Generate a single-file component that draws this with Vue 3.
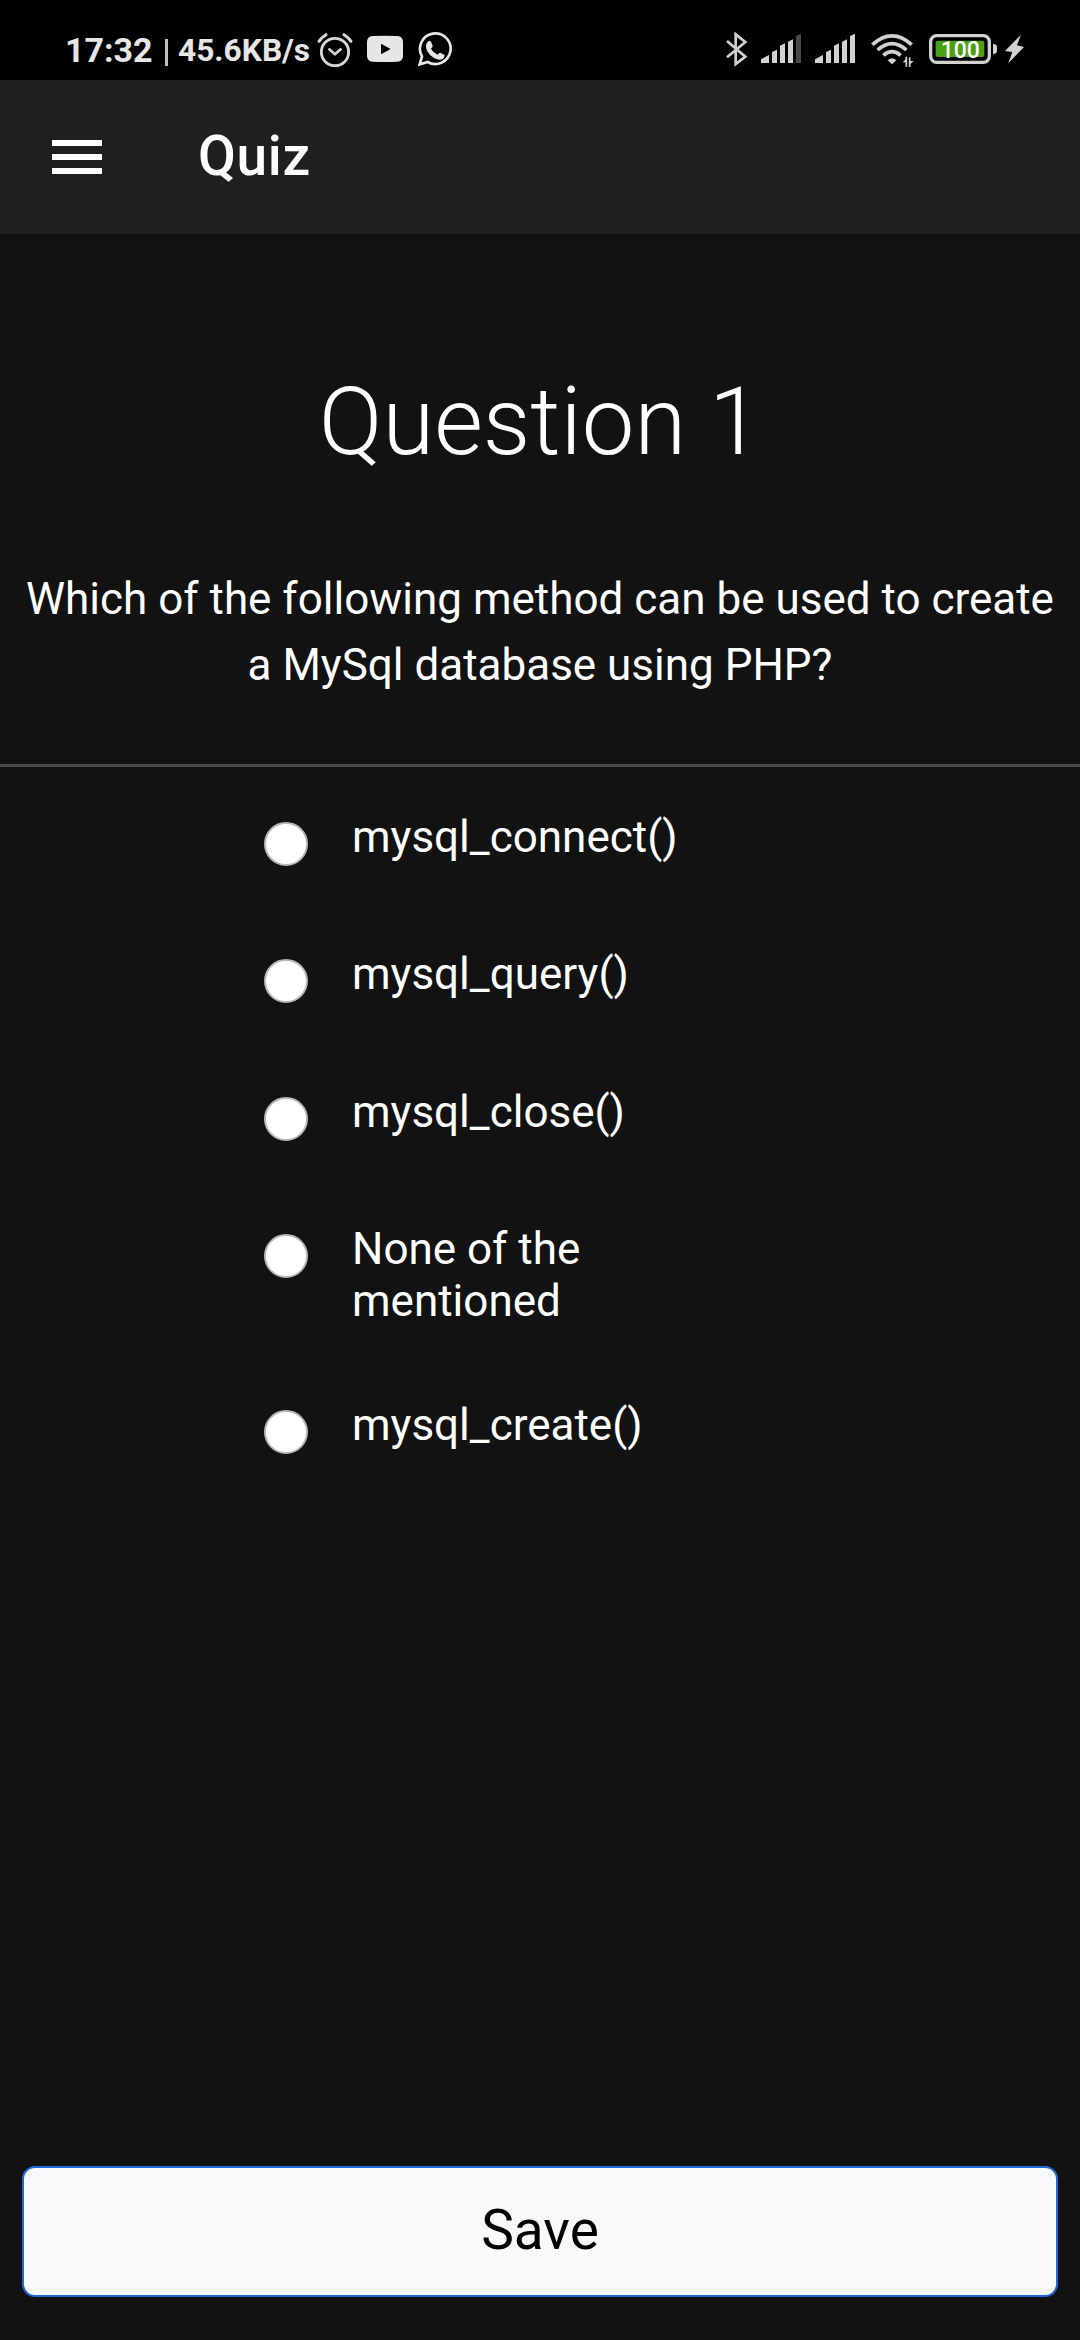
<script setup>
import { ref } from 'vue'

const question = {
  title: 'Question 1',
  text: 'Which of the following method can be used to create a MySql database using PHP?',
  options: ['mysql_connect()', 'mysql_query()', 'mysql_close()', 'None of the mentioned', 'mysql_create()']
}
const selected = ref(null)
</script>

<template>
  <div class="screen">
    <div class="status">
      <span class="clock">17:32</span>
      <span class="divider"></span>
      <span class="speed">45.6KB/s</span>
      <svg class="alarm" viewBox="828 -30 114 240" width="38" height="80" fill="none" stroke="#d6d6d6">
        <circle cx="885" cy="126" r="41" stroke-width="8.500" />
        <path d="M868 118l17 15 17-15" stroke-width="8" stroke-linecap="round" stroke-linejoin="round" />
        <path d="M837 94q8-12 21-20M933 94q-8-12-21-20" stroke-width="9" stroke-linecap="round" />
      </svg>
      <svg class="video" viewBox="981 -30 108 240" width="36" height="80">
        <path d="M998 78q37-2 74 0q17 1 17 18v42q0 16-17 17q-37 2-74 0q-17-1-17-17V96q0-17 17-18z" fill="#e6e6e6" />
        <path d="M1023 101v32l29-16z" fill="#000" />
      </svg>
      <svg class="chat" viewBox="1134 -30 102 240" width="34" height="80">
        <path d="M1139 163l7-24a46 46 0 1 1 17 17z" fill="none" stroke="#e6e6e6" stroke-width="8" />
        <path d="M1166 93q4-2 7 2l5 12q1 3-5 9q7 13 20 18q5-7 8-6l13 7q0 9-8 13q-9 4-24-4q-14-8-20-20q-7-14-2-24z" fill="#e6e6e6" />
      </svg>
      <span class="spacer"></span>
      <svg viewBox="78 -30 66 240" width="22" height="80" fill="none" stroke="#cfcfcf" stroke-width="8">
        <path d="M81 93l55 47-29 22V73l29 23-55 46" />
      </svg>
      <svg class="signal" viewBox="183 -30 120 240" width="40" height="80" fill="#d2d2d2">
        <path d="M183 159v-11l24-13v24zM216 159v-33l15-7v40zM240 159v-52l15-7v59zM264 159V95l15-7v71z" />
        <path d="M288 159V78l15-7v88z" fill="#484848" />
      </svg>
      <svg class="signal" viewBox="183 -30 120 240" width="40" height="80" fill="#d2d2d2">
        <path d="M183 159v-11l24-13v24zM216 159v-33l15-7v40zM240 159v-52l15-7v59zM264 159V95l15-7v71zM288 159V78l15-7v88z" />
      </svg>
      <svg class="wifi" viewBox="513 -30 129 240" width="43" height="80" fill="none" stroke="#d2d2d2" stroke-width="11">
        <path d="M517 104q59-53 118 0M533 120q43-38 86 0M550 136q26-22 52 0" />
        <path d="M563 151q13-13 26 0l-13 12z" fill="#d2d2d2" stroke="none" />
        <path d="M619 140v30M629 171v-29" stroke-width="5" />
        <path d="M608 157l11-11v11zM641 153l-12 11v-11z" fill="#d2d2d2" stroke="none" />
      </svg>
      <svg class="battery" viewBox="687 -30 204 240" width="68" height="80">
        <rect x="692" y="77" width="176" height="80" rx="18" fill="none" stroke="#d2d2d2" stroke-width="10" />
        <rect x="707" y="92" width="146" height="49" rx="6" fill="#49a012" />
        <path d="M879 102q12 0 12 9v12q0 9-12 9z" fill="#d2d2d2" />
        <text x="781" y="144" text-anchor="middle">100</text>
      </svg>
      <svg class="bolt" viewBox="915 -30 57 240" width="19" height="80">
        <path d="M963 74l-48 49 22 3-12 34 47-49-21-5z" fill="#d2d2d2" />
      </svg>
    </div>

    <header class="toolbar">
      <button class="menu" aria-label="Menu"><i></i><i></i><i></i></button>
      <span class="title">Quiz</span>
    </header>

    <main class="content">
      <h1>{{ question.title }}</h1>
      <p>{{ question.text }}</p>
      <div class="options">
        <label v-for="option in question.options" :key="option" class="option">
          <input v-model="selected" type="radio" name="answer" :value="option" />
          <span>{{ option }}</span>
        </label>
      </div>
    </main>

    <footer><button class="save">Save</button></footer>
  </div>
</template>

<style>
body { background: #121212; }
</style>

<style scoped>
.screen {
  width: 1080px;
  height: 2340px;
  display: flex;
  flex-direction: column;
  overflow: hidden;
  background: #121212;
  color: #fff;
  font-family: Roboto, sans-serif;
}
.status {
  flex: none;
  height: 80px;
  box-sizing: border-box;
  padding: 0 56px 0 65px;
  display: flex;
  background: #000;
  color: #e6e6e6;
  font-weight: 700;
  white-space: nowrap;
}
.status svg { flex: none; display: block; }
.clock { width: 100px; font-size: 34px; line-height: 100px; }
.divider { width: 3px; height: 27px; margin: 39px 10px 0 0; background: #bdbdbd; }
.speed { width: 138px; font-size: 31.700px; line-height: 101px; }
.video { margin-left: 13px; }
.chat { margin-left: 15px; }
.spacer { flex: 1; }
.signal { margin-left: 13px; }
.signal + .signal { margin-left: 14px; }
.wifi { margin-left: 16px; }
.battery { margin-left: 15px; }
.battery text { font-size: 69px; font-weight: 500; fill: #fff; }
.bolt { margin-left: 8px; }
.toolbar {
  flex: none;
  height: 154px;
  display: flex;
  align-items: center;
  background: #1f1f1f;
  box-shadow: 0 2px 12px rgba(0, 0, 0, .25);
}
.menu {
  width: 50px;
  margin: 0 0 0 52px;
  padding: 0;
  border: 0;
  background: none;
  display: flex;
  flex-direction: column;
  gap: 8.300px;
}
.menu i { height: 5.700px; background: #fff; }
.title {
  margin-left: 96px;
  padding-bottom: 2px;
  font-size: 55px;
  font-weight: 500;
  letter-spacing: .0125em;
}
.content { flex: 1; }
h1 {
  margin: 132px 0 0;
  font-size: 94px;
  line-height: 113px;
  font-weight: 300;
  text-align: center;
}
p {
  margin: 87px 0 0;
  padding: 0 22px 51px;
  height: 147px;
  border-bottom: 3px solid #4a4a4a;
  font-size: 44px;
  line-height: 66px;
  text-align: center;
}
.options { margin: 43.600px 0 0 264px; }
.option {
  display: flex;
  align-items: flex-start;
  gap: 44px;
  min-height: 65.500px;
  padding-bottom: 72px;
}
.option input {
  appearance: none;
  flex: none;
  box-sizing: border-box;
  width: 44px;
  height: 44px;
  margin: 11.100px 0 0;
  border: 2px solid #b8b8b8;
  border-radius: 50%;
  background: #fff;
}
.option span { width: 380px; font-size: 44px; line-height: 52px; }
footer { flex: none; padding: 0 22px 43px; }
.save {
  display: block;
  width: 100%;
  height: 131px;
  padding: 0 0 3px;
  border: 2px solid #1f6ad8;
  border-radius: 13px;
  background: #f8f9fb;
  color: #000;
  font: 400 55px Roboto, sans-serif;
}
</style>
